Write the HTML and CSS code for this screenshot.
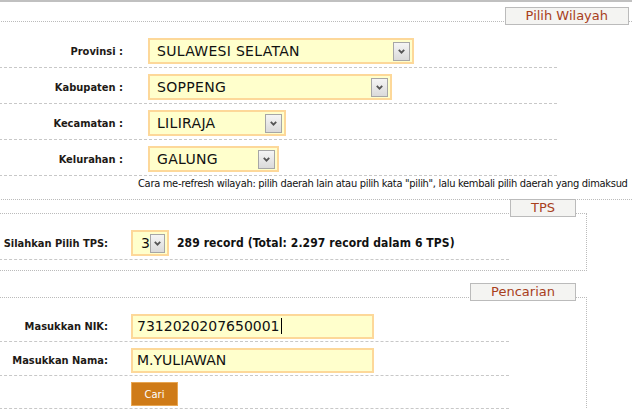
FILE: index.html
```html
<!DOCTYPE html>
<html lang="id">

<head>
    <meta charset="utf-8">
    <meta name="viewport" content="width=device-width, initial-scale=1.0">
    <title>Cek DPT</title>
    <link rel="stylesheet" href="styles.css">
</head>

<body>

    <div class="halaman">

        <!-- ================= PILIH WILAYAH ================= -->
        <div class="kotak kotak-wilayah">
            <div class="judul"><span>Pilih Wilayah</span></div>

            <div class="daftar">
                <div class="baris">
                    <div class="label">Provinsi :</div>
                    <div class="isi">
                        <div class="pilihan pilih-provinsi">
                            <span class="teks">SULAWESI SELATAN</span>
                            <span class="panah"><svg width="7" height="5" viewBox="0 0 7 5"><path d="M0.8 0.8 L3.5 3.6 L6.2 0.8" fill="none" stroke="#555" stroke-width="1.8"/></svg></span>
                        </div>
                    </div>
                </div>

                <div class="baris">
                    <div class="label">Kabupaten :</div>
                    <div class="isi">
                        <div class="pilihan pilih-kabupaten">
                            <span class="teks">SOPPENG</span>
                            <span class="panah"><svg width="7" height="5" viewBox="0 0 7 5"><path d="M0.8 0.8 L3.5 3.6 L6.2 0.8" fill="none" stroke="#555" stroke-width="1.8"/></svg></span>
                        </div>
                    </div>
                </div>

                <div class="baris">
                    <div class="label">Kecamatan :</div>
                    <div class="isi">
                        <div class="pilihan pilih-kecamatan">
                            <span class="teks">LILIRAJA</span>
                            <span class="panah"><svg width="7" height="5" viewBox="0 0 7 5"><path d="M0.8 0.8 L3.5 3.6 L6.2 0.8" fill="none" stroke="#555" stroke-width="1.8"/></svg></span>
                        </div>
                    </div>
                </div>

                <div class="baris">
                    <div class="label">Kelurahan :</div>
                    <div class="isi">
                        <div class="pilihan pilih-kelurahan">
                            <span class="teks">GALUNG</span>
                            <span class="panah"><svg width="7" height="5" viewBox="0 0 7 5"><path d="M0.8 0.8 L3.5 3.6 L6.2 0.8" fill="none" stroke="#555" stroke-width="1.8"/></svg></span>
                        </div>
                    </div>
                </div>
            </div>

            <div class="catatan">Cara me-refresh wilayah: pilih daerah lain atau pilih kata "pilih", lalu kembali pilih daerah yang dimaksud</div>
        </div>

        <!-- ================= TPS ================= -->
        <div class="kotak kotak-kecil kotak-tps">
            <div class="judul"><span>TPS</span></div>

            <div class="daftar">
                <div class="baris baris-kecil">
                    <div class="label">Silahkan Pilih TPS:</div>
                    <div class="isi">
                        <div class="pilihan pilih-tps">
                            <span class="teks">3</span>
                            <span class="panah"><svg width="7" height="5" viewBox="0 0 7 5"><path d="M0.8 0.8 L3.5 3.6 L6.2 0.8" fill="none" stroke="#555" stroke-width="1.8"/></svg></span>
                        </div>
                        <b class="jumlah">289 record (Total: 2.297 record dalam 6 TPS)</b>
                    </div>
                </div>
            </div>
        </div>

        <!-- ================= PENCARIAN ================= -->
        <div class="kotak kotak-kecil kotak-cari">
            <div class="judul"><span>Pencarian</span></div>

            <div class="daftar">
                <div class="baris baris-kecil baris-isian">
                    <div class="label">Masukkan NIK:</div>
                    <div class="isi">
                        <div class="isian">7312020207650001<span class="kursor"></span></div>
                    </div>
                </div>

                <div class="baris baris-kecil baris-isian">
                    <div class="label">Masukkan Nama:</div>
                    <div class="isi">
                        <div class="isian">M.YULIAWAN</div>
                    </div>
                </div>

                <div class="baris baris-kecil baris-isian">
                    <div class="label"></div>
                    <div class="isi">
                        <button class="tombol">Cari</button>
                    </div>
                </div>
            </div>
        </div>

    </div>

</body>

</html>
```

FILE: styles.css
```css
html,
body {
    margin: 0;
    overflow: hidden;
    background-color: white;
}

body {
    font-family: "DejaVu Sans Condensed", "DejaVu Sans", sans-serif;
    font-size: 11px;
    color: #111;
}

.halaman {
    border-top: 2px solid #c0c0c0;
}

/* kotak = fieldset */
.kotak {
    box-sizing: border-box;
    border: 1px dotted #bbb;
    margin-left: -12px;
    padding: 0 12px 0 0;
}

.kotak-wilayah {
    width: 654px;
    margin-top: 19px;
}

.kotak-kecil {
    width: 599px;
    padding-right: 10px;
}

.kotak-tps {
    margin-top: 13px;
    padding-bottom: 10px;
}

.kotak-cari {
    margin-top: 26px;
    padding-bottom: 20px;
}

/* judul = legend */
.judul {
    display: flex;
    justify-content: flex-end;
    margin-top: -15px;
}

.judul span {
    display: block;
    height: 16px;
    line-height: 16px;
    padding: 0 20px;
    border: 1px solid #bbb;
    background-color: #f4f4f2;
    font-family: "DejaVu Sans", sans-serif;
    font-size: 13px;
    color: #a8401c;
}

.daftar {
    margin-top: 7px;
}

.baris {
    display: grid;
    grid-template-columns: 134px auto;
    column-gap: 25px;
    align-items: center;
    width: 568px;
    padding: 6px 0 3px 0;
    border-bottom: 1px dashed #c8c8c8;
}

.baris-kecil {
    grid-template-columns: 119px auto;
    column-gap: 23px;
    width: 520px;
}

.baris-isian {
    padding-bottom: 2px;
}

.label {
    text-align: right;
    font-weight: bold;
    font-size: 11px;
    color: #1e1a16;
}

.isi {
    display: flex;
    align-items: center;
    gap: 8px;
}

/* pilihan = select */
.pilihan {
    box-sizing: border-box;
    display: flex;
    align-items: center;
    height: 26px;
    border: 2px solid #fdd899;
    background-color: #ffffcc;
    padding-left: 7px;
    font-family: "DejaVu Sans", sans-serif;
    font-size: 14px;
    color: #111;
}

.pilihan .teks {
    flex: 1;
    white-space: nowrap;
    letter-spacing: 0.3px;
}

.panah {
    box-sizing: border-box;
    display: flex;
    align-items: center;
    justify-content: center;
    width: 17px;
    height: 19px;
    margin-right: 2px;
    border: 1px solid #a6a6a6;
    background: linear-gradient(#f5f5f5, #dadada);
}

.pilih-provinsi {
    width: 266px;
}

.pilih-kabupaten {
    width: 244px;
}

.pilih-kecamatan {
    width: 138px;
}

.pilih-kelurahan {
    width: 131px;
}

.pilih-tps {
    width: 38px;
    padding-left: 8px;
}

.jumlah {
    font-size: 12px;
    color: #111;
    white-space: nowrap;
    letter-spacing: 0.1px;
}

.catatan {
    padding: 0 0 7px 149px;
    line-height: 16px;
    font-size: 11px;
    letter-spacing: -0.3px;
    white-space: nowrap;
    color: #111;
}

/* isian = input */
.isian {
    box-sizing: border-box;
    width: 243px;
    height: 25px;
    line-height: 21px;
    border: 2px solid #fdd899;
    background-color: #ffffcc;
    padding-left: 4px;
    font-family: "DejaVu Sans", sans-serif;
    font-size: 14px;
    color: #111;
}

.kursor {
    display: inline-block;
    width: 1px;
    height: 16px;
    margin-left: 1px;
    background-color: #000;
    vertical-align: -3px;
}

.tombol {
    width: 47px;
    height: 24px;
    border: 1px solid #e8a652;
    background-color: #cf7b18;
    color: white;
    font-family: "DejaVu Sans Condensed", "DejaVu Sans", sans-serif;
    font-size: 11px;
    padding: 0;
}
```
